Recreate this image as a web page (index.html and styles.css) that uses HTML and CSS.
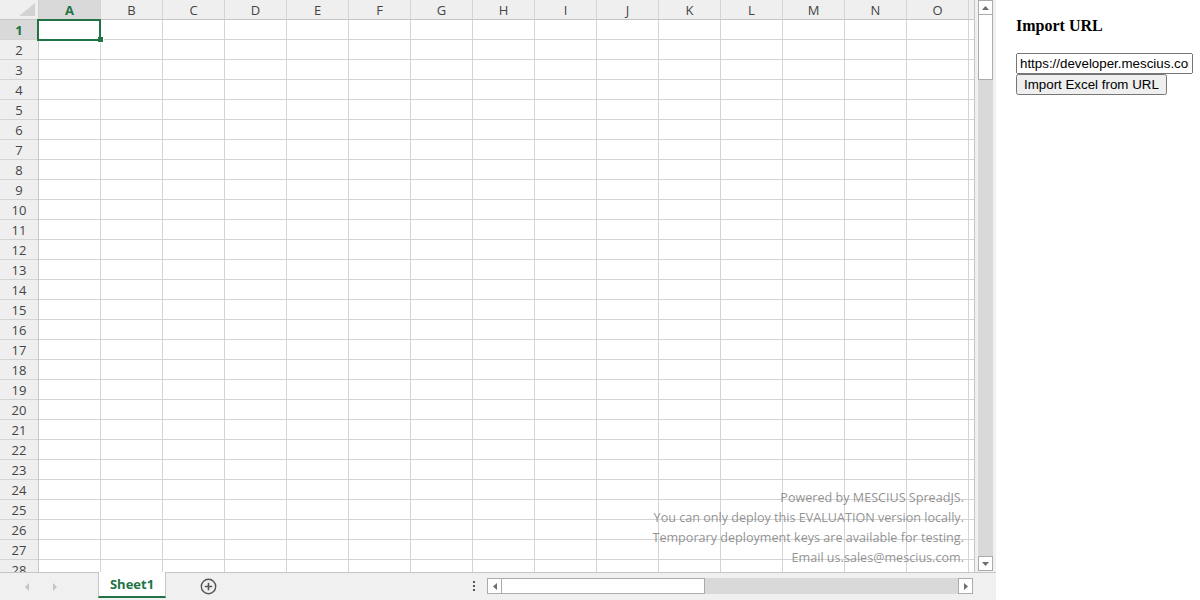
FILE: index.html
```html
<!DOCTYPE html>
<html>
<head>
<meta charset="utf-8">
<link rel="stylesheet" href="styles.css">
</head>
<body>
<div class="page">
  <div class="ss">
    <div class="ss-main">
      <div class="viewport">
        <div class="corner">
          <svg width="16" height="13" viewBox="0 0 16 13"><polygon points="16,0 16,13 0,13" fill="#d2d2d2"/></svg>
        </div>
        <div class="col-headers">
          <div class="ch sel">A</div><div class="ch">B</div><div class="ch">C</div><div class="ch">D</div><div class="ch">E</div><div class="ch">F</div><div class="ch">G</div><div class="ch">H</div><div class="ch">I</div><div class="ch">J</div><div class="ch">K</div><div class="ch">L</div><div class="ch">M</div><div class="ch">N</div><div class="ch">O</div><div class="ch"></div>
        </div>
        <div class="row-headers">
          <div class="rh sel">1</div><div class="rh">2</div><div class="rh">3</div><div class="rh">4</div><div class="rh">5</div><div class="rh">6</div><div class="rh">7</div><div class="rh">8</div><div class="rh">9</div><div class="rh">10</div><div class="rh">11</div><div class="rh">12</div><div class="rh">13</div><div class="rh">14</div><div class="rh">15</div><div class="rh">16</div><div class="rh">17</div><div class="rh">18</div><div class="rh">19</div><div class="rh">20</div><div class="rh">21</div><div class="rh">22</div><div class="rh">23</div><div class="rh">24</div><div class="rh">25</div><div class="rh">26</div><div class="rh">27</div><div class="rh">28</div>
        </div>
        <div class="cells">
          <div class="selection"></div>
          <div class="fill-handle"></div>
          <div class="watermark">
            <div>Powered by MESCIUS SpreadJS.</div>
            <div>You can only deploy this EVALUATION version locally.</div>
            <div>Temporary deployment keys are available for testing.</div>
            <div>Email us.sales@mescius.com.</div>
          </div>
        </div>
      </div>
      <div class="vscroll">
        <div class="sbtn"><svg width="7" height="4" viewBox="0 0 7 4"><polygon points="0,4 7,4 3.5,0" fill="#6d6d6d"/></svg></div>
        <div class="vthumb"></div>
        <div class="vtrack"></div>
        <div class="sbtn"><svg width="7" height="4" viewBox="0 0 7 4"><polygon points="0,0 7,0 3.5,4" fill="#6d6d6d"/></svg></div>
      </div>
    </div>
    <div class="tabbar">
      <div class="nav">
        <svg class="nav-l" width="4" height="8" viewBox="0 0 4 8"><polygon points="4,0 4,8 0,4" fill="#c4c4c4"/></svg>
        <svg class="nav-r" width="4" height="8" viewBox="0 0 4 8"><polygon points="0,0 0,8 4,4" fill="#c4c4c4"/></svg>
      </div>
      <div class="tab">Sheet1</div>
      <div class="add">
        <svg width="17" height="17" viewBox="0 0 17 17"><circle cx="8.5" cy="8.5" r="7.2" fill="none" stroke="#555" stroke-width="1.4"/><path d="M8.5 4.8v7.4M4.8 8.5h7.4" stroke="#555" stroke-width="1.6"/></svg>
      </div>
      <div class="dots"><span></span><span></span><span></span></div>
      <div class="hscroll">
        <div class="sbtn h"><svg width="4" height="7" viewBox="0 0 4 7"><polygon points="4,0 4,7 0,3.5" fill="#6d6d6d"/></svg></div>
        <div class="hthumb"></div>
        <div class="htrack"></div>
        <div class="sbtn h"><svg width="4" height="7" viewBox="0 0 4 7"><polygon points="0,0 0,7 4,3.5" fill="#6d6d6d"/></svg></div>
      </div>
    </div>
  </div>
  <div class="options">
    <h4 class="opt-title">Import URL</h4>
    <div class="opt-row">
      <input class="url" type="text" value="https://developer.mescius.com/spreadjs/demos/samples/features/import-excel/data.xlsx">
      <button class="import-btn">Import Excel from URL</button>
    </div>
  </div>
</div>
</body>
</html>
```

FILE: styles.css
```css
html, body {
  margin: 0;
  padding: 0;
  background: #ffffff;
}

.page {
  display: flex;
  height: 600px;
  width: 1200px;
  overflow: hidden;
}

.ss {
  width: 996px;
  height: 600px;
  display: flex;
  flex-direction: column;
  flex: none;
}

.ss-main {
  display: flex;
  height: 572px;
}

.viewport {
  width: 974px;
  height: 572px;
  border-right: 1px solid #c6c6c6;
  display: grid;
  grid-template-columns: 39px 935px;
  grid-template-rows: 20px 552px;
  overflow: hidden;
  font-family: "Open Sans", "Noto Sans", sans-serif;
}

.corner {
  background: #efefef;
  border-right: 1px solid #d0d0d0;
  border-bottom: 1px solid #c6c6c6;
  box-sizing: border-box;
  display: flex;
  align-items: flex-end;
  justify-content: flex-end;
  padding: 0 3px 3px 0;
}

.corner svg { display: block; }

.col-headers {
  display: flex;
  background: #efefef;
  border-bottom: 1px solid #c6c6c6;
  box-sizing: border-box;
  overflow: hidden;
}

.ch {
  flex: none;
  width: 62px;
  height: 19px;
  box-sizing: border-box;
  border-right: 1px solid #d4d4d4;
  text-align: center;
  font-size: 13px;
  line-height: 20px;
  color: #444;
}

.ch.sel, .rh.sel {
  background: #d9d9d9;
  color: #217346;
  font-weight: 700;
}

.row-headers {
  display: flex;
  flex-direction: column;
  background: #efefef;
  border-right: 1px solid #c6c6c6;
  box-sizing: border-box;
  overflow: hidden;
}

.rh {
  flex: none;
  height: 20px;
  box-sizing: border-box;
  border-bottom: 1px solid #d4d4d4;
  text-align: center;
  font-size: 13px;
  line-height: 20px;
  color: #444;
}

.cells {
  position: relative;
  background-color: #fff;
  background-image:
    linear-gradient(to right, transparent 61px, #d4d4d4 61px),
    linear-gradient(to bottom, transparent 19px, #d4d4d4 19px);
  background-size: 62px 20px;
}

.selection {
  position: absolute;
  left: -2px;
  top: -1px;
  width: 64px;
  height: 22px;
  box-sizing: border-box;
  border: 2px solid #217346;
}

.fill-handle {
  position: absolute;
  left: 59px;
  top: 17px;
  width: 5px;
  height: 5px;
  background: #217346;
  border: 1px solid #fff;
  border-top: none;
  border-left: none;
}

.watermark {
  position: absolute;
  right: 10px;
  bottom: 4px;
  text-align: right;
  font-family: "Open Sans", "Noto Sans", sans-serif;
  font-size: 12.6px;
  line-height: 20px;
  color: rgba(110, 110, 110, 0.75);
}

.vscroll {
  width: 21px;
  height: 572px;
  box-sizing: border-box;
  padding: 0 3px 1px 3px;
  background: #f0f0f0;
  display: flex;
  flex-direction: column;
}

.sbtn {
  flex: none;
  height: 15px;
  box-sizing: border-box;
  background: #fff;
  border: 1px solid #ababab;
  display: flex;
  align-items: center;
  justify-content: center;
}

.sbtn svg { display: block; }

.vthumb {
  flex: none;
  height: 65px;
  box-sizing: border-box;
  background: #fff;
  border: 1px solid #ababab;
  border-top: none;
}

.vtrack {
  flex: 1;
  background: #d9d9d9;
}

.tabbar {
  height: 28px;
  background: #f0f0f0;
  display: flex;
  align-items: flex-start;
  border-top: 1px solid #c6c6c6;
  box-sizing: border-box;
}

.nav {
  width: 98px;
  height: 27px;
  display: flex;
  align-items: center;
  flex: none;
}

.nav-l { margin-left: 25px; }
.nav-r { margin-left: 24px; }

.tab {
  flex: none;
  width: 68px;
  height: 26px;
  margin-top: -1px;
  box-sizing: border-box;
  background: #fff;
  border-left: 1px solid #c6c6c6;
  border-right: 1px solid #c6c6c6;
  border-bottom: 2px solid #217346;
  text-align: center;
  font-family: "Open Sans", "Noto Sans", sans-serif;
  font-weight: 700;
  font-size: 13px;
  line-height: 25px;
  color: #217346;
}

.add {
  flex: none;
  margin-left: 34px;
  height: 27px;
  display: flex;
  align-items: center;
}

.add svg { display: block; }

.dots {
  flex: none;
  margin-left: auto;
  margin-top: 8px;
  margin-right: 12px;
  display: flex;
  flex-direction: column;
  gap: 2px;
}

.dots span {
  display: block;
  width: 2px;
  height: 2px;
  background: #555;
}

.hscroll {
  flex: none;
  width: 486px;
  height: 16px;
  margin-top: 5px;
  margin-right: 23px;
  display: flex;
}

.sbtn.h {
  width: 15px;
  height: 16px;
}

.hthumb {
  flex: none;
  width: 203px;
  height: 16px;
  box-sizing: border-box;
  background: #fff;
  border: 1px solid #ababab;
  border-left: none;
}

.htrack {
  flex: 1;
  background: #d9d9d9;
}

.options {
  flex: 1;
  padding-left: 20px;
  display: flex;
  flex-direction: column;
  align-items: flex-start;
}

.opt-title {
  font-family: "Liberation Serif", "Times New Roman", serif;
  font-size: 16px;
  font-weight: 700;
  margin: 17px 0 18px 0;
}

.opt-row {
  display: flex;
  flex-direction: column;
  align-items: flex-start;
}

.url {
  width: 177px;
  box-sizing: border-box;
  font-family: "Liberation Sans", Arial, sans-serif;
  font-size: 13.333px;
  margin: 0;
}

.import-btn {
  font-family: "Liberation Sans", Arial, sans-serif;
  font-size: 13.333px;
  margin: 0;
}
```
